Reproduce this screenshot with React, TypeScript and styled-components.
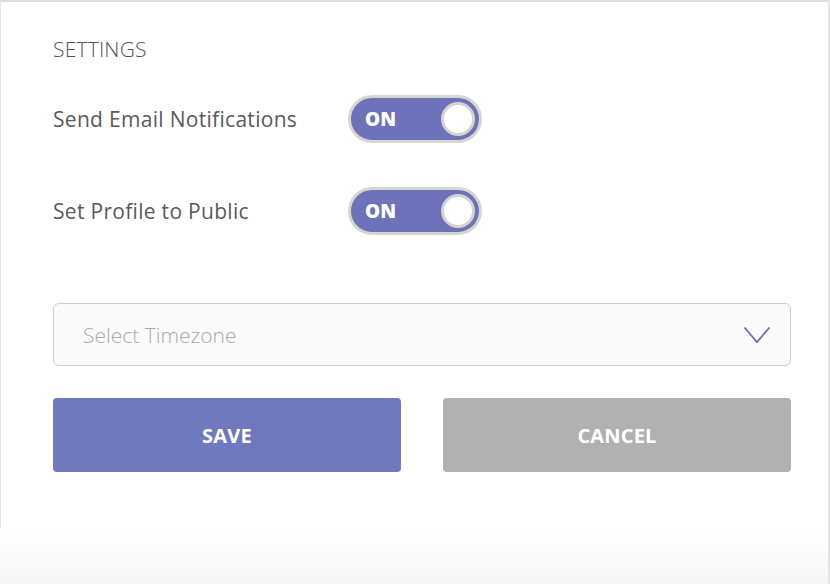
import React from "react";
import styled, { createGlobalStyle } from "styled-components";

const Global = createGlobalStyle`
  html, body { margin: 0; padding: 0; background: #fff; }
  body { font-family: "Open Sans", "Noto Sans", sans-serif; }
`;

const Page = styled.div`
  width: 830px;
  height: 584px;
  box-sizing: border-box;
  border-right: 2px solid #e4e4e4;
  background: linear-gradient(to bottom, #ffffff 0px, #ffffff 528px, #f6f6f6 584px);
  display: flex;
  flex-direction: column;
`;

const Card = styled.div`
  height: 528px;
  box-sizing: border-box;
  border-top: 2px solid #dcdcdc;
  border-left: 1px solid #e6e6e6;
  background: #fff;
  padding: 33px 37px 0 52px;
  display: flex;
  flex-direction: column;
`;

const Title = styled.div`
  font-size: 21px;
  line-height: 28px;
  color: #555;
  letter-spacing: 0.2px;
  font-weight: 300;
`;

const Row = styled.div<{ $mt: number }>`
  display: flex;
  align-items: center;
  margin-top: ${(p) => p.$mt}px;
  height: 48px;
`;

const Label = styled.div`
  width: 295px;
  font-size: 21px;
  line-height: 28px;
  color: #5a5a5a;
  letter-spacing: 0.3px;
`;

const Toggle = styled.div`
  width: 134px;
  height: 48px;
  box-sizing: border-box;
  border-radius: 24px;
  border: 3px solid #d6d6cf;
  background: #6e72ba;
  display: flex;
  align-items: center;
  justify-content: space-between;
  padding: 0 4px 0 14px;
`;

const ToggleText = styled.span`
  color: #fff;
  font-weight: 800;
  font-size: 19px;
  letter-spacing: 0.2px;
`;

const Knob = styled.span`
  width: 34px;
  height: 34px;
  box-sizing: border-box;
  border-radius: 50%;
  background: #fff;
  border: 3px solid #d4d4cc;
`;

const Select = styled.div`
  margin-top: 68px;
  height: 63px;
  box-sizing: border-box;
  border: 1px solid #cfcfcf;
  border-radius: 6px;
  background: #fafafa;
  display: flex;
  align-items: center;
  justify-content: space-between;
  padding: 0 19px 0 29px;
`;

const Placeholder = styled.span`
  font-size: 21px;
  color: #aaa;
  font-weight: 300;
`;

const Buttons = styled.div`
  margin-top: 32px;
  display: grid;
  grid-template-columns: 1fr 1fr;
  gap: 42px;
`;

const Button = styled.button<{ $primary?: boolean }>`
  height: 74px;
  border: none;
  border-radius: 4px;
  background: ${(p) => (p.$primary ? "#7079bd" : "#b1b1b1")};
  color: #fff;
  font-family: "Open Sans", sans-serif;
  font-weight: 700;
  font-size: 20px;
  letter-spacing: 0.2px;
`;

const Chevron = () => (
  <svg width="28" height="18" viewBox="0 0 28 18" fill="none">
    <path d="M1.5 1.5 L14 16 L26.5 1.5" stroke="#6a6fb8" strokeWidth="1.8" />
  </svg>
);

export default function App() {
  return (
    <>
      <Global />
      <Page>
        <Card>
          <Title>SETTINGS</Title>
          <Row $mt={32}>
            <Label>Send Email Notifications</Label>
            <Toggle>
              <ToggleText>ON</ToggleText>
              <Knob />
            </Toggle>
          </Row>
          <Row $mt={44}>
            <Label>Set Profile to Public</Label>
            <Toggle>
              <ToggleText>ON</ToggleText>
              <Knob />
            </Toggle>
          </Row>
          <Select>
            <Placeholder>Select Timezone</Placeholder>
            <Chevron />
          </Select>
          <Buttons>
            <Button $primary>SAVE</Button>
            <Button>CANCEL</Button>
          </Buttons>
        </Card>
      </Page>
    </>
  );
}
